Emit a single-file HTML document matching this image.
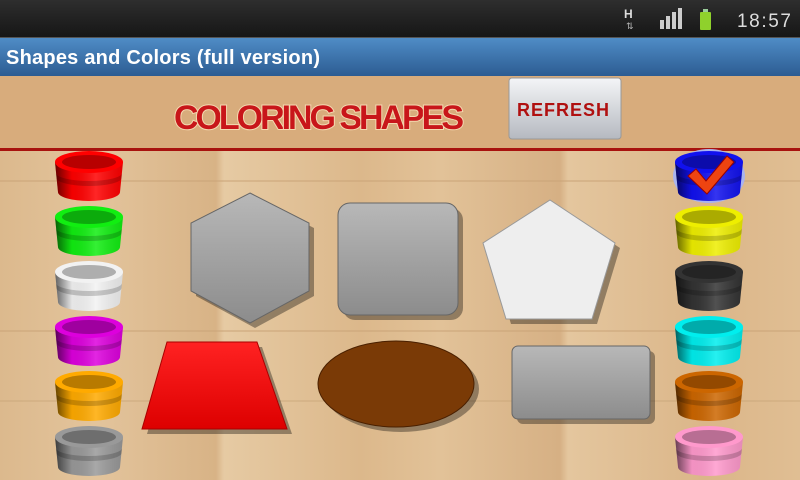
<!DOCTYPE html>
<html><head><meta charset="utf-8"><style>
html,body{margin:0;padding:0;width:800px;height:480px;overflow:hidden;font-family:"Liberation Sans",sans-serif}
</style></head><body>
<svg width="800" height="480" viewBox="0 0 800 480" xmlns="http://www.w3.org/2000/svg">
<defs>
<linearGradient id="sb" x1="0" y1="0" x2="0" y2="1"><stop offset="0" stop-color="#2e2e2e"/><stop offset="1" stop-color="#161616"/></linearGradient>
<linearGradient id="tb" x1="0" y1="0" x2="0" y2="1"><stop offset="0" stop-color="#4f8cc6"/><stop offset="1" stop-color="#2c5c92"/></linearGradient>
<linearGradient id="btn" x1="0" y1="0" x2="0" y2="1"><stop offset="0" stop-color="#f4f5f7"/><stop offset="1" stop-color="#b5b9c0"/></linearGradient>
<linearGradient id="wood" x1="0" y1="0" x2="1" y2="0">
<stop offset="0" stop-color="#dcb98d"/><stop offset=".12" stop-color="#e3c49c"/><stop offset=".27" stop-color="#d8b386"/><stop offset=".28" stop-color="#e6caa3"/><stop offset=".45" stop-color="#dcb88b"/><stop offset=".55" stop-color="#e2c298"/><stop offset=".7" stop-color="#d6b084"/><stop offset=".71" stop-color="#e4c69e"/><stop offset=".88" stop-color="#dbb689"/><stop offset="1" stop-color="#e0be93"/></linearGradient>
<linearGradient id="potsh" x1="0" y1="0" x2="1" y2="0"><stop offset="0" stop-color="#000" stop-opacity=".6"/><stop offset=".25" stop-color="#000" stop-opacity=".05"/><stop offset=".6" stop-color="#fff" stop-opacity=".15"/><stop offset="1" stop-color="#000" stop-opacity=".1"/></linearGradient>
<linearGradient id="gry" x1="0" y1="0" x2="0" y2="1"><stop offset="0" stop-color="#b8b8b8"/><stop offset="1" stop-color="#8c8c8c"/></linearGradient>
<linearGradient id="red" x1="0" y1="0" x2="0" y2="1"><stop offset="0" stop-color="#f22"/><stop offset="1" stop-color="#d00"/></linearGradient>
<symbol id="pot" viewBox="0 0 70 52">
<path d="M1,12 L4,42 A31,9 0 0 0 66,42 L69,12 Z" fill="currentColor"/>
<path d="M1,12 L4,42 A31,9 0 0 0 66,42 L69,12 Z" fill="url(#potsh)"/>
<path d="M2.5,28 A32.5,8 0 0 0 67.5,28 L68,23 A33,8 0 0 1 2,23 Z" fill="#000" opacity=".18"/>
<ellipse cx="35" cy="12" rx="34" ry="11" fill="currentColor"/>
<ellipse cx="35" cy="12" rx="27" ry="7" fill="#000" opacity=".28"/>
</symbol>
</defs>
<rect width="800" height="480" fill="url(#wood)"/>
<rect y="180" width="800" height="2" fill="#c9a477" opacity=".5"/>
<rect y="330" width="800" height="2" fill="#c9a477" opacity=".5"/>
<rect y="400" width="800" height="2" fill="#c9a477" opacity=".4"/>
<rect width="800" height="37" fill="url(#sb)"/>
<g fill="#ccc"><rect x="660" y="20" width="4" height="9"/><rect x="666" y="16" width="4" height="13"/><rect x="672" y="12" width="4" height="17"/><rect x="678" y="8" width="4" height="21"/></g>
<text x="624" y="18" font-size="12" font-weight="bold" fill="#ddd">H</text>
<text x="626" y="29" font-size="9" fill="#bbb">⇅</text>
<rect x="703" y="9" width="5" height="3" fill="#9c9"/>
<rect x="700" y="12" width="11" height="18" rx="1" fill="#8fd12c"/>
<text x="737" y="27" font-size="19" fill="#ddd" textLength="54">18:57</text>
<rect y="37" width="800" height="1" fill="#555"/>
<rect y="38" width="800" height="38" fill="url(#tb)"/>
<text x="6" y="64" font-size="20" font-weight="bold" fill="#fff" textLength="314">Shapes and Colors (full version)</text>
<rect y="76" width="800" height="72" fill="#d8ac7c"/>
<rect y="148" width="800" height="3" fill="#a8120e"/>
<text x="174" y="129" font-size="34" font-weight="bold" fill="#c8161a" stroke="#f4d8b0" stroke-width="2" paint-order="stroke" textLength="290">COLORING SHAPES</text>
<rect x="509" y="78" width="112" height="61" rx="3" fill="url(#btn)" stroke="#999"/>
<text x="517" y="116" font-size="18" font-weight="bold" fill="#b01010" textLength="92">REFRESH</text>
<g>
<use href="#pot" x="54" y="150" width="70" height="52" style="color:#f00"/>
<use href="#pot" x="54" y="205" width="70" height="52" style="color:#1e1"/>
<use href="#pot" x="54" y="260" width="70" height="52" style="color:#f2f2f2"/>
<use href="#pot" x="54" y="315" width="70" height="52" style="color:#d0d"/>
<use href="#pot" x="54" y="370" width="70" height="52" style="color:#fa0"/>
<use href="#pot" x="54" y="425" width="70" height="52" style="color:#999"/>
<ellipse cx="709" cy="176" rx="36" ry="27" fill="#aab4ee"/>
<use href="#pot" x="674" y="150" width="70" height="52" style="color:#11e"/>
<use href="#pot" x="674" y="205" width="70" height="52" style="color:#ee0"/>
<use href="#pot" x="674" y="260" width="70" height="52" style="color:#333"/>
<use href="#pot" x="674" y="315" width="70" height="52" style="color:#0ee"/>
<use href="#pot" x="674" y="370" width="70" height="52" style="color:#c60"/>
<use href="#pot" x="674" y="425" width="70" height="52" style="color:#f9c"/>
</g>
<path d="M688,176 L696,169 L706,181 L727,156 L734,162 L707,194 Z" fill="#e41" stroke="#900"/>
<g opacity=".35" fill="#000"><path d="M255,198 L314,228 L314,296 L255,328 L196,296 L196,228 Z"/><rect x="343" y="208" width="120" height="112" rx="12"/><path d="M555,205 L620,248 L597,324 L511,324 L488,248 Z"/><path d="M172,347 L262,347 L292,434 L147,434 Z"/><ellipse cx="401" cy="389" rx="78" ry="43"/><rect x="517" y="351" width="138" height="73" rx="6"/></g>
<path d="M250,193 L309,223 L309,291 L250,323 L191,291 L191,223 Z" fill="url(#gry)" stroke="#666"/>
<rect x="338" y="203" width="120" height="112" rx="12" fill="url(#gry)" stroke="#666"/>
<path d="M550,200 L615,243 L592,319 L506,319 L483,243 Z" fill="#eee" stroke="#999"/>
<path d="M167,342 L257,342 L287,429 L142,429 Z" fill="url(#red)" stroke="#a00"/>
<ellipse cx="396" cy="384" rx="78" ry="43" fill="#7a3a06" stroke="#4a2000"/>
<rect x="512" y="346" width="138" height="73" rx="6" fill="url(#gry)" stroke="#666"/>
</svg>
</body></html>
